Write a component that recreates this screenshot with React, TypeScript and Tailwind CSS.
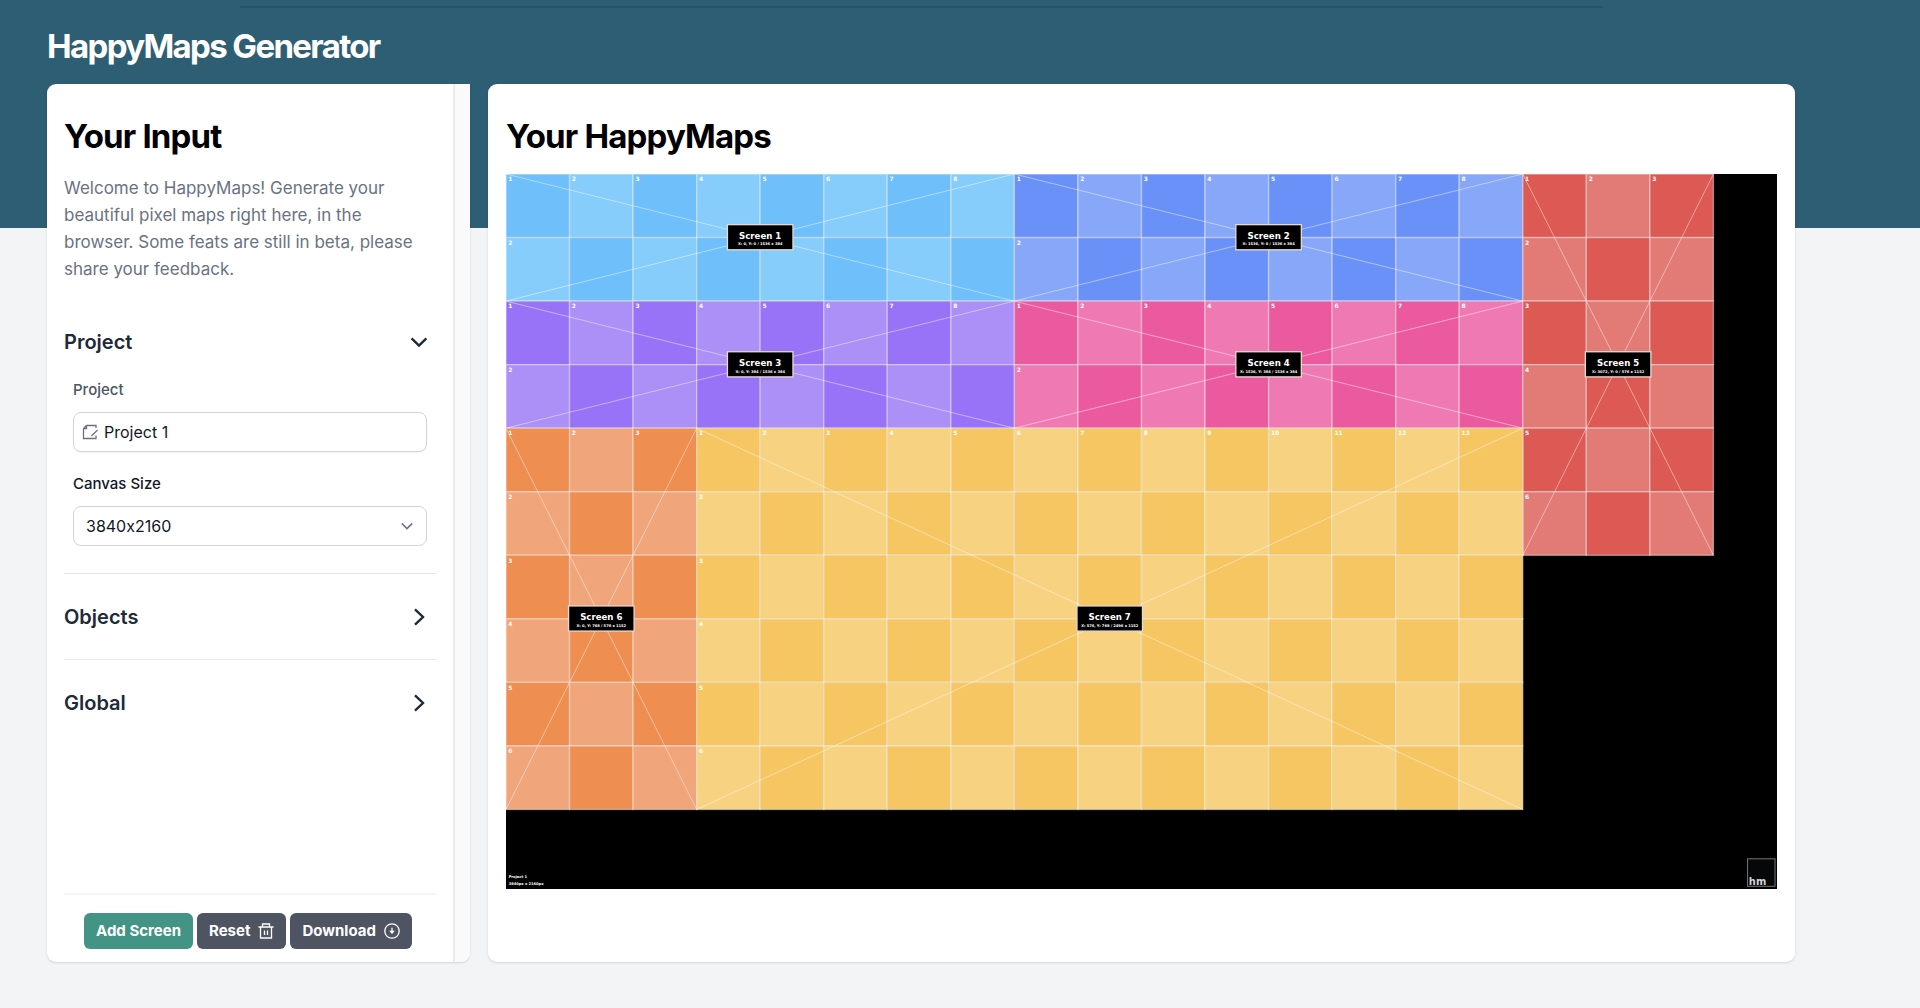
import { useState } from 'react'
import type { ReactNode } from 'react'

type Screen = {
  name: string
  x: number
  y: number
  cols: number
  rows: number
  dark: string
  light: string
}

const TILE = 192
const CANVAS_SIZES = ['3840x2160', '1920x1080', '1280x720']

const screens: Screen[] = [
  { name: 'Screen 1', x: 0, y: 0, cols: 8, rows: 2, dark: '#6ebffa', light: '#87cdfb' },
  { name: 'Screen 2', x: 1536, y: 0, cols: 8, rows: 2, dark: '#6991f7', light: '#87a7f8' },
  { name: 'Screen 3', x: 0, y: 384, cols: 8, rows: 2, dark: '#9873f7', light: '#ad8ff8' },
  { name: 'Screen 4', x: 1536, y: 384, cols: 8, rows: 2, dark: '#eb5a9f', light: '#ef7ab3' },
  { name: 'Screen 5', x: 3072, y: 0, cols: 3, rows: 6, dark: '#dc5a53', light: '#e27a76' },
  { name: 'Screen 6', x: 0, y: 768, cols: 3, rows: 6, dark: '#ee8e50', light: '#f1a57b' },
  { name: 'Screen 7', x: 576, y: 768, cols: 13, rows: 6, dark: '#f5c661', light: '#f7d280' },
]

function ScreenMap({ name, x, y, cols, rows, dark, light }: Screen) {
  const w = cols * TILE
  const h = rows * TILE
  const tiles = Array.from({ length: cols * rows }, (_, i) => ({
    col: i % cols,
    row: Math.floor(i / cols),
  }))

  return (
    <g transform={`translate(${x} ${y})`}>
      {tiles.map(({ col, row }) => (
        <rect
          key={`${col}-${row}`}
          x={col * TILE}
          y={row * TILE}
          width={TILE}
          height={TILE}
          fill={(col + row) % 2 === 0 ? dark : light}
          stroke="#fff"
          strokeOpacity="0.45"
          strokeWidth="4"
        />
      ))}
      <path d={`M0 0L${w} ${h}M${w} 0L0 ${h}`} stroke="#fff" strokeOpacity="0.45" strokeWidth="3" />
      <g fill="#fff" fontSize="18" fontWeight="700">
        {tiles
          .filter(({ col, row }) => col === 0 || row === 0)
          .map(({ col, row }) => (
            <text key={`${col}-${row}`} x={col * TILE + 7} y={row * TILE + 22}>
              {row === 0 ? col + 1 : row + 1}
            </text>
          ))}
      </g>
      <g transform={`translate(${w / 2} ${h / 2})`} textAnchor="middle" fill="#fff" fontWeight="700">
        <rect x="-99" y="-39" width="198" height="76" fill="#000" stroke="#e8d8d4" strokeWidth="4" />
        <text y="3" fontSize="26">
          {name}
        </text>
        <text y="24" fontSize="11">
          {`X: ${x}, Y: ${y} / ${w} x ${h}`}
        </text>
      </g>
    </g>
  )
}

function Chevron({ open }: { open: boolean }) {
  return (
    <svg
      viewBox="0 0 18 18"
      className="size-[18px]"
      fill="none"
      stroke="currentColor"
      strokeWidth="2.4"
      aria-hidden="true"
    >
      <path d={open ? 'M1.6 5.4L9 12.6L16.4 5.4' : 'M5 1.4L13 9L5 16.6'} />
    </svg>
  )
}

function Section({
  title,
  open,
  onToggle,
  children,
}: {
  title: string
  open: boolean
  onToggle: () => void
  children?: ReactNode
}) {
  return (
    <div className="border-b border-gray-200 last:border-b-0">
      <h3>
        <button
          type="button"
          aria-expanded={open}
          onClick={onToggle}
          className="flex h-[85px] w-full items-center justify-between pr-2 text-xl font-semibold text-gray-800"
        >
          {title}
          <Chevron open={open} />
        </button>
      </h3>
      {open && children}
    </div>
  )
}

export default function App() {
  const [project, setProject] = useState('Project 1')
  const [size, setSize] = useState(CANVAS_SIZES[0])
  const [openSection, setOpenSection] = useState('Project')

  const toggle = (title: string) => setOpenSection(openSection === title ? '' : title)

  return (
    <div className="min-h-screen bg-[linear-gradient(#2e5e74_228px,#f3f4f6_228px)] font-['Inter',sans-serif]">
      <div className="ml-[12.5%] mr-[16.5%] h-2 border-b-2 border-[#275267]" />
      <div className="pl-[47px] pr-[125px] pb-[46px]">
        <header className="flex h-[76px] items-center">
          <h1 className="text-[33px] leading-10 font-bold tracking-tighter text-white">HappyMaps Generator</h1>
        </header>

        <main className="flex min-h-[878px] gap-[18px]">
          <section className="flex w-[423px] shrink-0 rounded-l-[9px] rounded-br-[9px] bg-white shadow-sm">
            <div className="flex flex-1 flex-col px-[17px]">
              <h2 className="pt-8 text-[33px] leading-10 font-bold tracking-tight text-black">Your Input</h2>
              <p className="mt-[19px] pr-3 text-[17px] leading-[27px] text-gray-500">
                Welcome to HappyMaps! Generate your beautiful pixel maps right here, in the browser. Some feats
                are still in beta, please share your feedback.
              </p>

              <div className="mt-4">
                <Section title="Project" open={openSection === 'Project'} onToggle={() => toggle('Project')}>
                  <div className="-mt-[6px] flex flex-col px-[9px] pb-[27px] text-base text-gray-900">
                    <label htmlFor="project" className="text-[15px] leading-6 font-medium text-gray-600">
                      Project
                    </label>
                    <div className="mt-[10px] flex h-10 items-center gap-[6px] rounded-lg border border-gray-300 px-2 shadow-xs">
                      <svg
                        viewBox="0 0 16 16"
                        className="size-4 shrink-0 text-gray-500"
                        fill="none"
                        stroke="currentColor"
                        strokeWidth="1.3"
                        aria-hidden="true"
                      >
                        <path d="M14 4V1.5H4.5L1.5 4.5V14.5H14V11.5M1.5 4.5H4.5V1.5M9.5 12L15.5 6" />
                      </svg>
                      <input
                        id="project"
                        type="text"
                        value={project}
                        onChange={(e) => setProject(e.target.value)}
                        className="w-full outline-none"
                      />
                    </div>
                    <label htmlFor="canvas-size" className="mt-5 text-[15px] leading-6 font-medium">
                      Canvas Size
                    </label>
                    <div className="mt-[10px] grid items-center">
                      <select
                        id="canvas-size"
                        value={size}
                        onChange={(e) => setSize(e.target.value)}
                        className="col-start-1 row-start-1 h-10 w-full appearance-none rounded-lg border border-gray-300 px-3 [font-feature-settings:'calt'_0]"
                      >
                        {CANVAS_SIZES.map((s) => (
                          <option key={s}>{s}</option>
                        ))}
                      </select>
                      <svg
                        viewBox="0 0 12 12"
                        className="pointer-events-none col-start-1 row-start-1 mr-[14px] size-3 justify-self-end text-gray-500"
                        fill="none"
                        stroke="currentColor"
                        strokeWidth="1.5"
                        aria-hidden="true"
                      >
                        <path d="M.8 3.4L6 8.6L11.2 3.4" />
                      </svg>
                    </div>
                  </div>
                </Section>
                <Section title="Objects" open={openSection === 'Objects'} onToggle={() => toggle('Objects')} />
                <Section title="Global" open={openSection === 'Global'} onToggle={() => toggle('Global')} />
              </div>

              <div className="mt-auto flex justify-center gap-1 border-t-2 border-gray-100 pt-[18px] pr-1 pb-[13px] text-[15px] font-bold text-white">
                <button type="button" className="h-9 rounded-md bg-[#439484] px-3">
                  Add Screen
                </button>
                <button type="button" className="flex h-9 items-center gap-2 rounded-md bg-[#4f5462] px-3">
                  Reset
                  <svg
                    viewBox="0 0 16 16"
                    className="size-4"
                    fill="none"
                    stroke="currentColor"
                    strokeWidth="1.3"
                    aria-hidden="true"
                  >
                    <path d="M.5 4H15.5M4.5 4V1H11.5V4M2.5 4V15H13.5V4M6.5 7.5V12M9.5 7.5V12" />
                  </svg>
                </button>
                <button type="button" className="flex h-9 items-center gap-2 rounded-md bg-[#4f5462] px-3">
                  Download
                  <svg
                    viewBox="0 0 16 16"
                    className="size-4"
                    fill="none"
                    stroke="currentColor"
                    strokeWidth="1.3"
                    aria-hidden="true"
                  >
                    <circle cx="8" cy="8" r="7.2" />
                    <path d="M8 4.8V10" />
                    <path d="M5.2 7.8H10.8L8 11Z" fill="currentColor" stroke="none" />
                  </svg>
                </button>
              </div>
            </div>
            {/* scrollbar track */}
            <div className="w-[17px] rounded-br-[9px] border-l-2 border-[#ebebeb] bg-[#fafafa]" />
          </section>

          <section className="min-w-0 flex-1 rounded-[9px] bg-white px-[18px] shadow-sm">
            <h2 className="pt-8 text-[33px] leading-10 font-bold tracking-tight text-black">Your HappyMaps</h2>
            <svg
              viewBox="0 0 3840 2160"
              className="mt-[18px] w-full bg-black font-['DejaVu_Sans',sans-serif]"
              role="img"
              aria-label="Pixel map preview"
            >
              {screens.map((screen) => (
                <ScreenMap key={screen.name} {...screen} />
              ))}
              <g fill="#fff" fontSize="11" fontWeight="700">
                <text x="8" y="2128">{project}</text>
                <text x="8" y="2147">3840px x 2160px</text>
              </g>
              <rect x="3751" y="2069" width="83" height="83" fill="#050708" stroke="#777" strokeWidth="3" />
              <text x="3755" y="2148" fontSize="30" fontWeight="700" fill="#d4d4d4">
                hm
              </text>
            </svg>
          </section>
        </main>
      </div>
    </div>
  )
}
